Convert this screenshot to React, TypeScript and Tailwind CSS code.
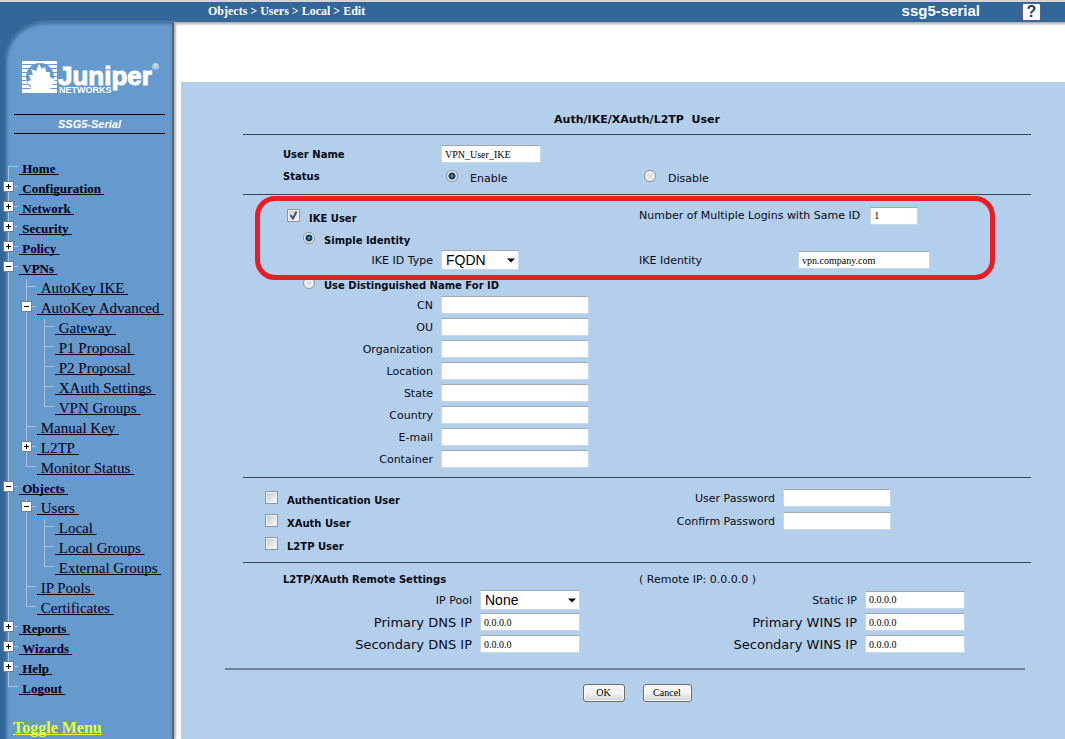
import { ReactNode, useState } from 'react';

interface MenuRow {
  label: string;
  // one entry per indent column, the last one is the node's own connector
  guides: Guide[];
}

type Guide = 'line' | 'first' | 'tee' | 'end' | 'plus' | 'minus';

const menuRows: MenuRow[] = [
  { label: 'Home', guides: ['first'] },
  { label: 'Configuration', guides: ['plus'] },
  { label: 'Network', guides: ['plus'] },
  { label: 'Security', guides: ['plus'] },
  { label: 'Policy', guides: ['plus'] },
  { label: 'VPNs', guides: ['minus'] },
  { label: 'AutoKey IKE', guides: ['line', 'tee'] },
  { label: 'AutoKey Advanced', guides: ['line', 'minus'] },
  { label: 'Gateway', guides: ['line', 'line', 'tee'] },
  { label: 'P1 Proposal', guides: ['line', 'line', 'tee'] },
  { label: 'P2 Proposal', guides: ['line', 'line', 'tee'] },
  { label: 'XAuth Settings', guides: ['line', 'line', 'tee'] },
  { label: 'VPN Groups', guides: ['line', 'line', 'end'] },
  { label: 'Manual Key', guides: ['line', 'tee'] },
  { label: 'L2TP', guides: ['line', 'plus'] },
  { label: 'Monitor Status', guides: ['line', 'end'] },
  { label: 'Objects', guides: ['minus'] },
  { label: 'Users', guides: ['line', 'minus'] },
  { label: 'Local', guides: ['line', 'line', 'tee'] },
  { label: 'Local Groups', guides: ['line', 'line', 'tee'] },
  { label: 'External Groups', guides: ['line', 'line', 'end'] },
  { label: 'IP Pools', guides: ['line', 'tee'] },
  { label: 'Certificates', guides: ['line', 'end'] },
  { label: 'Reports', guides: ['plus'] },
  { label: 'Wizards', guides: ['plus'] },
  { label: 'Help', guides: ['plus'] },
  { label: 'Logout', guides: ['end'] },
];

const dnFields = ['CN', 'OU', 'Organization', 'Location', 'State', 'Country', 'E-mail', 'Container'];

function TreeGuide({ kind }: { kind: Guide }) {
  const top = kind === 'first' ? 7 : 0;
  const bottom = kind === 'end' ? 7 : 20;
  return (
    <svg className="h-5 w-[18px] shrink-0" viewBox="0 0 18 20" shapeRendering="crispEdges" aria-hidden="true">
      <path d={`M8.5 ${top}V${bottom}`} stroke="#a9c2dc" />
      {kind !== 'line' && <path d="M8 7.5H18" stroke="#a9c2dc" />}
      {(kind === 'plus' || kind === 'minus') && (
        <>
          <rect x="3.5" y="2.5" width="10" height="10" fill="#fff" stroke="#7b7b78" />
          <path d="M6 7.5H11" stroke="#000" />
          {kind === 'plus' && <path d="M8.5 5V10" stroke="#000" />}
        </>
      )}
    </svg>
  );
}

function Logo() {
  return (
    <svg className="block h-10 w-[142px]" viewBox="0 0 142 40" role="img" aria-label="Juniper Networks">
      <rect x="1" y="3" width="35" height="32" fill="#fff" />
      <path
        d="M1 6.5H13M1 10.5H8M1 14.5H6M1 18.5H5M1 22.5H5M1 26.5H7M1 30.5H10M24 6.5H36M29 10.5H36M32 14.5H36M33 18.5H36M32 22.5H36M31 26.5H36M28 30.5H36"
        stroke="#6699cc"
      />
      <circle cx="19" cy="19" r="14" fill="#6699cc" />
      <path
        d="M9 33L10 28L6 24L10 22L8 17L12 17L10 11L15 13L18 6L21 11L24 9L25 14L29 14L29 19L34 22L31 26L33 29L28 31L29 35L8 35Z"
        fill="#fff"
      />
      <text x="37" y="27" fill="#fff" fontFamily="Liberation Sans, Arial, sans-serif" fontSize="26" fontWeight="700" stroke="#fff" strokeWidth="1">
        Juniper
      </text>
      <text x="38" y="35" fill="#fff" fontFamily="Liberation Sans, Arial, sans-serif" fontSize="9" fontWeight="700">
        NETWORKS
      </text>
      <text x="131" y="12" fill="#fff" fontFamily="Liberation Sans, Arial, sans-serif" fontSize="9" fontWeight="700">
        ®
      </text>
    </svg>
  );
}

function Sidebar() {
  return (
    <aside className="relative w-[174px] shrink-0 bg-[#336699]">
      <div className="ml-[5px] min-h-full rounded-tl-[38px] border-r-2 border-r-[#4f6478] bg-[#6699cc] pt-9 shadow-[inset_2px_2px_3px_#3f6f9f,2px_0_2px_#b5b5b5]">
        <div className="pl-4">
          <Logo />
        </div>
        <div className="mt-4 mr-[7px] ml-[9px] flex h-5 items-center justify-center border-y border-black font-['Liberation_Sans',Arial,sans-serif] text-[11px] font-bold italic text-white">
          SSG5-Serial
        </div>
        <nav className="mt-[25px] -ml-[5px] font-['Liberation_Serif','Times_New_Roman',serif]">
          <ul>
            {menuRows.map((row) => (
              <li key={row.label} className="flex h-5 whitespace-pre">
                {row.guides.map((kind, i) => (
                  <TreeGuide key={i} kind={kind} />
                ))}
                <a
                  href="#"
                  className={`ml-px text-[#000018] underline [text-decoration-skip-ink:none] ${
                    row.guides.length === 1 ? 'text-[13px] leading-5 font-bold' : 'text-[15px] leading-[18px]'
                  }`}
                >
                  {`\u00a0${row.label}\u00a0`}
                </a>
              </li>
            ))}
          </ul>
        </nav>
        <a
          href="#"
          className="mt-[19px] ml-2 block font-['Liberation_Serif','Times_New_Roman',serif] text-[16px] leading-5 font-bold text-[#e8ff3c] underline [text-decoration-skip-ink:none]"
        >
          Toggle Menu
        </a>
      </div>
    </aside>
  );
}

const inputClass =
  "h-[18px] border border-[#c9d6e6] border-t-[#9fa9b5] bg-white px-[3px] font-['Liberation_Serif','Times_New_Roman',serif] text-[10px] leading-4 text-black outline-none";

const labelClass = 'pt-0.5 pr-2 text-right';

const boldClass = 'text-[10px] font-bold';

interface FieldProps {
  id: string;
  width: string;
  value?: string;
  type?: string;
}

function TextInput({ id, width, value = '', type = 'text' }: FieldProps) {
  return <input id={id} name={id} type={type} defaultValue={value} className={`${inputClass} ${width}`} />;
}

function Select({ id, width, options }: { id: string; width: string; options: string[] }) {
  return (
    <div className={`relative ${width}`}>
      <select
        id={id}
        name={id}
        className="block h-5 w-full appearance-none border border-[#c9d6e6] border-t-[#9fa9b5] bg-white px-1 font-['Liberation_Sans',Arial,sans-serif] text-[14px] leading-4 text-black outline-none"
      >
        {options.map((o) => (
          <option key={o}>{o}</option>
        ))}
      </select>
      <svg className="pointer-events-none absolute top-2 right-1 h-[5px] w-2" viewBox="0 0 8 5" aria-hidden="true">
        <path d="M0 0.5H8L4 4.5Z" fill="#000" />
      </svg>
    </div>
  );
}

interface ChoiceProps {
  id: string;
  type: 'radio' | 'checkbox';
  name?: string;
  label: string;
  checked?: boolean;
  bold?: boolean;
  gap?: string;
}

function Choice({ id, type, name, label, checked, bold, gap = 'gap-[9px]' }: ChoiceProps) {
  return (
    <div className={`flex items-center ${gap}`}>
      {type === 'radio' ? (
        <input
          id={id}
          name={name}
          type="radio"
          defaultChecked={checked}
          className="size-3 shrink-0 appearance-none rounded-full border border-[#8b9198] bg-[radial-gradient(circle,#d8d8d8_0,#f4f4f4_60%)] checked:bg-[radial-gradient(circle,#4fc0dc_0,#124a6e_2px,#0d2f4c_3px,#f4f4f4_4px)]"
        />
      ) : (
        <span className="relative size-[13px] shrink-0">
          <input
            id={id}
            name={id}
            type="checkbox"
            defaultChecked={checked}
            className="peer block size-[13px] appearance-none border border-[#8b959f] bg-linear-to-br from-[#c3c8cd] to-white shadow-[inset_0_0_0_1px_#f1f1f1]"
          />
          <svg
            className="pointer-events-none absolute inset-0 hidden size-[13px] peer-checked:block"
            viewBox="0 0 13 13"
            aria-hidden="true"
          >
            <path d="M3.5 6L6 9.5L9.5 2.5" fill="none" stroke="#44547f" strokeWidth="2" />
          </svg>
        </span>
      )}
      <label htmlFor={id} className={`pt-1.5 ${bold ? boldClass : ''}`}>
        {label}
      </label>
    </div>
  );
}

function Section({ children, className = '' }: { children: ReactNode; className?: string }) {
  return <section className={`border-t border-[#3c4650] ${className}`}>{children}</section>;
}

function Row({ children, height = 'h-[22px]' }: { children: ReactNode; height?: string }) {
  return <div className={`grid grid-cols-[198px_198px_1fr] items-center ${height}`}>{children}</div>;
}

function RemoteRow({ children, height = 'h-[22px]' }: { children: ReactNode; height?: string }) {
  return <div className={`grid grid-cols-[237px_167px_218px_1fr] items-center ${height}`}>{children}</div>;
}

function FormButton({ children, width }: { children: ReactNode; width: string }) {
  return (
    <button
      type="button"
      className={`h-[18px] rounded-[3px] border border-[#6b7075] bg-linear-to-b from-[#f4f4f4] from-50% to-[#d2d2d2] font-['Liberation_Serif','Times_New_Roman',serif] text-[10px] leading-4 text-black shadow-[inset_0_0_0_1px_#fafafa] ${width}`}
    >
      {children}
    </button>
  );
}

function UserForm() {
  return (
    <form
      className="flex-1 bg-[#b3cfec] pt-[30px] pr-[34px] pb-9 pl-[62px] font-['DejaVu_Sans',Verdana,sans-serif] text-[11px] leading-4 whitespace-nowrap text-[#0a0a14]"
      onSubmit={(e) => e.preventDefault()}
    >
      <h1 className="mb-1.5 text-center font-bold whitespace-pre">Auth/IKE/XAuth/L2TP{'  '}User</h1>

      <Section className="pt-2 pb-[7px]">
        <Row>
          <label htmlFor="username" className={`pt-0.5 pl-10 ${boldClass}`}>
            User Name
          </label>
          <TextInput id="username" width="w-[100px]" value="VPN_User_IKE" />
        </Row>
        <Row>
          <span className={`pt-0.5 pl-10 ${boldClass}`}>Status</span>
          <div className="pl-[5px]">
            <Choice id="enable" type="radio" name="status" label="Enable" gap="gap-3" checked />
          </div>
          <div className="pl-[5px]">
            <Choice id="disable" type="radio" name="status" label="Disable" gap="gap-3" />
          </div>
        </Row>
      </Section>

      <Section className="relative pt-[9px] pb-[7px]">
        <Row height="h-[23px]">
          <div className="col-span-2 pl-11">
            <Choice id="ike-user" type="checkbox" label="IKE User" bold checked />
          </div>
          <div className="flex items-center gap-2.5">
            <label htmlFor="logins">Number of Multiple Logins with Same ID</label>
            <TextInput id="logins" width="w-12" value="1" />
          </div>
        </Row>
        <Row>
          <div className="col-span-2 pl-[60px]">
            <Choice id="simple" type="radio" name="identity" label="Simple Identity" bold checked />
          </div>
        </Row>
        <Row>
          <label htmlFor="id-type" className={labelClass}>
            IKE ID Type
          </label>
          <Select id="id-type" width="w-[78px]" options={['FQDN', 'IP Address', 'U-FQDN', 'AUTO']} />
          <div className="flex items-center">
            <label htmlFor="ike-identity" className="w-[159px] pt-0.5">
              IKE Identity
            </label>
            <TextInput id="ike-identity" width="w-[132px]" value="vpn.company.com" />
          </div>
        </Row>
        <Row height="h-[23px]">
          <div className="col-span-2 pl-[60px]">
            <Choice id="dn" type="radio" name="identity" label="Use Distinguished Name For ID" bold />
          </div>
        </Row>
        {dnFields.map((field) => (
          <Row key={field}>
            <label htmlFor={field} className={labelClass}>
              {field}
            </label>
            <TextInput id={field} width="w-[148px]" />
          </Row>
        ))}
        {/* Highlight around the IKE settings */}
        <div className="pointer-events-none absolute top-px right-9 left-3 h-[84px] rounded-[20px] border-5 border-[#ea1c24]" />
      </Section>

      <Section className="pt-2 pb-[7px]">
        <Row height="h-[23px]">
          <div className="col-span-2 pl-[22px]">
            <Choice id="auth-user" type="checkbox" label="Authentication User" bold />
          </div>
          <div className="flex items-center">
            <label htmlFor="password" className={`w-36 ${labelClass}`}>
              User Password
            </label>
            <TextInput id="password" type="password" width="w-[108px]" />
          </div>
        </Row>
        <Row height="h-[23px]">
          <div className="col-span-2 pl-[22px]">
            <Choice id="xauth-user" type="checkbox" label="XAuth User" bold />
          </div>
          <div className="flex items-center">
            <label htmlFor="confirm" className={`w-36 ${labelClass}`}>
              Confirm Password
            </label>
            <TextInput id="confirm" type="password" width="w-[108px]" />
          </div>
        </Row>
        <Row height="h-[23px]">
          <div className="col-span-2 pl-[22px]">
            <Choice id="l2tp-user" type="checkbox" label="L2TP User" bold />
          </div>
        </Row>
      </Section>

      <Section className="pt-[5px]">
        <Row height="h-5">
          <h2 className={`col-span-2 pt-1 pl-10 ${boldClass}`}>L2TP/XAuth Remote Settings</h2>
          <span className="pt-1">( Remote IP: 0.0.0.0 )</span>
        </Row>
        <RemoteRow height="h-[23px]">
          <label htmlFor="pool" className={labelClass}>
            IP Pool
          </label>
          <Select id="pool" width="w-[100px]" options={['None']} />
          <label htmlFor="static-ip" className={labelClass}>
            Static IP
          </label>
          <TextInput id="static-ip" width="w-[100px]" value="0.0.0.0" />
        </RemoteRow>
        {['Primary', 'Secondary'].map((rank) => (
          <RemoteRow key={rank}>
            <label htmlFor={`${rank}-dns`} className={`text-[13px] ${labelClass}`}>
              {rank} DNS IP
            </label>
            <TextInput id={`${rank}-dns`} width="w-[100px]" value="0.0.0.0" />
            <label htmlFor={`${rank}-wins`} className={`text-[13px] ${labelClass}`}>
              {rank} WINS IP
            </label>
            <TextInput id={`${rank}-wins`} width="w-[100px]" value="0.0.0.0" />
          </RemoteRow>
        ))}
      </Section>

      <hr className="mt-[13px] mr-1.5 -ml-[18px] border-t-2 border-[#75818c]" />
      <div className="flex justify-center gap-[18px] pt-3.5">
        <FormButton width="w-[42px]">OK</FormButton>
        <FormButton width="w-[49px]">Cancel</FormButton>
      </div>
    </form>
  );
}

export default function App() {
  const [helpOpen, setHelpOpen] = useState(false);

  return (
    <div className="flex min-h-screen flex-col bg-white">
      <header className="flex h-[22px] items-center border-t-2 border-[#d5d5d5] bg-[#336699] pr-6 pl-52 text-white">
        <span className="pb-0.5 font-['Liberation_Serif','Times_New_Roman',serif] text-[12px] leading-4 font-bold">
          Objects &gt; Users &gt; Local &gt; Edit
        </span>
        <span className="mr-[42px] ml-auto pb-0.5 font-['Liberation_Sans',Arial,sans-serif] text-[15px] leading-4 font-bold">
          ssg5-serial
        </span>
        <button
          type="button"
          aria-label="Help"
          aria-expanded={helpOpen}
          onClick={() => setHelpOpen(!helpOpen)}
          className="flex h-[18px] w-[19px] items-center justify-center rounded-[2px] border border-[#5a5f8c] bg-white font-['Liberation_Sans',Arial,sans-serif] text-[16px] leading-4 font-bold text-[#1c3f66]"
        >
          ?
        </button>
      </header>
      <div className="flex flex-1">
        <Sidebar />
        <main className="flex min-w-0 flex-1 flex-col bg-[linear-gradient(#a8a8a8,#ffffff_4px)] pt-[60px] pl-[7px]">
          <UserForm />
        </main>
      </div>
    </div>
  );
}
